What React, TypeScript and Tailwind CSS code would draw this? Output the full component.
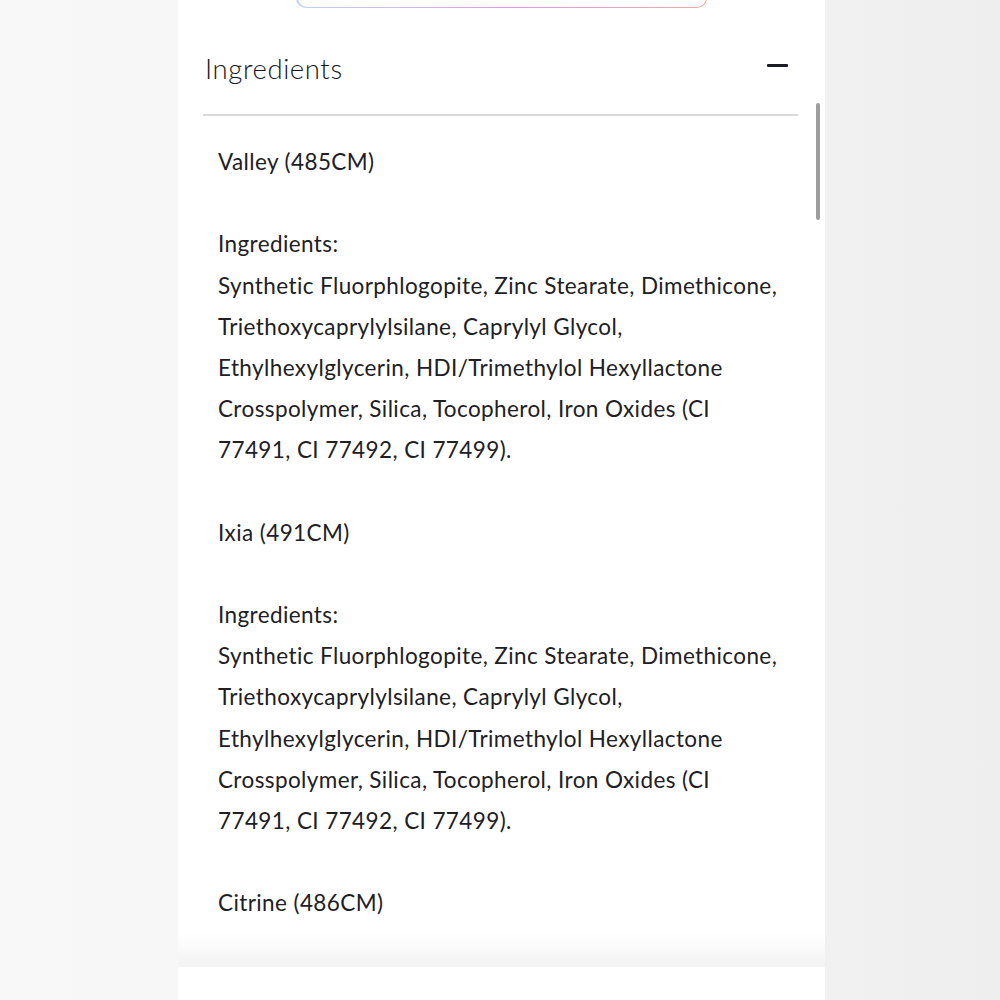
import React from "react";

const lines = [
  "Valley (485CM)",
  "",
  "Ingredients:",
  "Synthetic Fluorphlogopite, Zinc Stearate, Dimethicone,",
  "Triethoxycaprylylsilane, Caprylyl Glycol,",
  "Ethylhexylglycerin, HDI/Trimethylol Hexyllactone",
  "Crosspolymer, Silica, Tocopherol, Iron Oxides (CI",
  "77491, CI 77492, CI 77499).",
  "",
  "Ixia (491CM)",
  "",
  "Ingredients:",
  "Synthetic Fluorphlogopite, Zinc Stearate, Dimethicone,",
  "Triethoxycaprylylsilane, Caprylyl Glycol,",
  "Ethylhexylglycerin, HDI/Trimethylol Hexyllactone",
  "Crosspolymer, Silica, Tocopherol, Iron Oxides (CI",
  "77491, CI 77492, CI 77499).",
  "",
  "Citrine (486CM)",
];

export default function App() {
  return (
    <div
      className="w-full h-[1000px] overflow-hidden flex justify-center bg-gradient-to-r from-[#f8f8f8] via-[#f6f6f6] to-[#eeeeee]"
      style={{ fontFamily: "Lato, 'Noto Sans', sans-serif" }}
    >
      <div className="relative w-[647px] ml-[3px] bg-white flex flex-col">
        {/* cut-off button at the top */}
        <div className="h-[8px] overflow-hidden flex justify-center">
          <div className="shrink-0 w-[411px] h-[50px] -mt-[42px] rounded-[10px] p-[1.5px] bg-gradient-to-r from-[#b9d6f5] via-[#e29ae8] to-[#f0a9a0]">
            <div className="w-full h-full rounded-[9px] bg-white" />
          </div>
        </div>

        {/* accordion header */}
        <div className="flex items-start justify-between pl-[27px] pr-[37px] pt-[45px] pb-[29px]">
          <h2 className="text-[27.5px] leading-[32px] font-light text-[#151519] tracking-[0.6px]">
            Ingredients
          </h2>
          <div className="mt-[11px] w-[21px] h-[3px] rounded-[1px] bg-[#1b1b26]" />
        </div>
        <div className="ml-[25px] mr-[27px] h-[2px] bg-[#dadada]" />

        {/* scrolling body */}
        <div className="relative h-[851px] overflow-hidden">
          <div className="pl-[40px] pt-[25px] text-[22.5px] tracking-[0.4px] text-[#202024]">
            {lines.map((line, i) => (
              <div key={i} className="h-[41.2px] leading-[41.2px] whitespace-pre">
                {line}
              </div>
            ))}
          </div>
          <div className="absolute left-0 right-0 bottom-0 h-[34px] bg-gradient-to-b from-white/0 to-[#f3f3f3]" />
        </div>
        <div className="flex-1 bg-white" />

        {/* scrollbar thumb */}
        <div className="absolute left-[638px] top-[103px] w-[4px] h-[117px] rounded-full bg-[#9d9d9d]" />
      </div>
    </div>
  );
}
